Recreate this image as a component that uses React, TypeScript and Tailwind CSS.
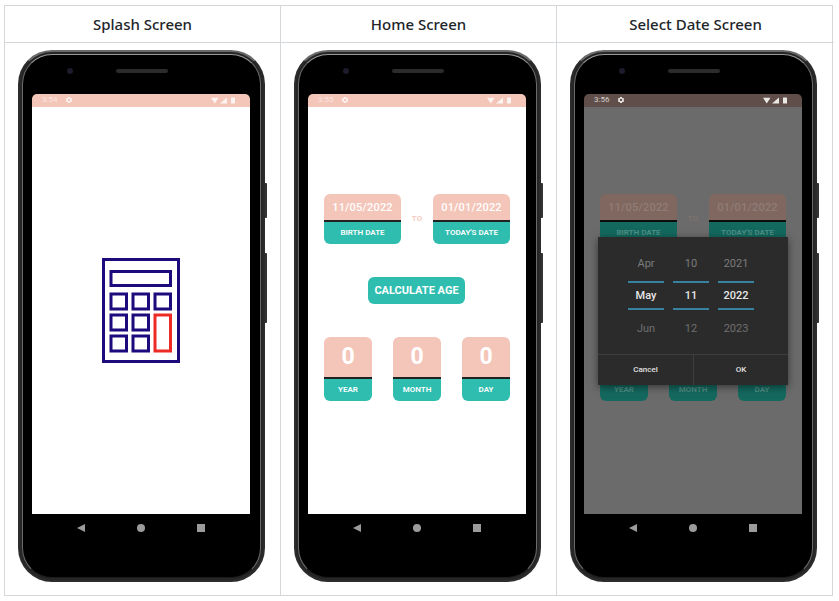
import type { ReactNode } from 'react';

const PINK = 'bg-[#f4c5b9]';
const TEAL = 'bg-[#2fbdaf]';

function StatusBar({ time, dim }: { time: string; dim?: boolean }) {
  const color = dim ? '#ece8e6' : '#fdf3f0';
  return (
    <div className={`${dim ? 'bg-[#5f4e49]' : PINK} flex h-[13px] items-center pl-[10px] pr-[15px]`}>
      <span
        className="w-[23px] font-['Roboto',sans-serif] text-[8px] leading-none"
        style={{ color: dim ? '#d8d2d0' : '#fae6e0' }}
      >
        {time}
      </span>
      <svg width="8" height="8" viewBox="0 0 24 24">
        <path
          fill={color}
          fillRule="evenodd"
          d="M19.4 13a7.5 7.5 0 0 0 0-2l2.1-1.6-2-3.5-2.5 1a7.5 7.5 0 0 0-1.7-1L15 3.2h-6l-.4 2.7a7.5 7.5 0 0 0-1.7 1l-2.5-1-2 3.5L4.5 11a7.5 7.5 0 0 0 0 2l-2.1 1.6 2 3.5 2.5-1a7.5 7.5 0 0 0 1.7 1l.4 2.7h6l.4-2.7a7.5 7.5 0 0 0 1.7-1l2.5 1 2-3.5zM12 15.5a3.5 3.5 0 1 1 0-7 3.5 3.5 0 0 1 0 7z"
        />
      </svg>
      <svg className="ml-auto" width="24" height="7" viewBox="0 0 24 7">
        <path fill={color} d="M0 0.8h7.5L3.75 6.5z" />
        <path fill={color} d="M9 6.5L16 0.5v6z" />
        <rect fill={color} x="20" y="0.5" width="4" height="6" rx="0.5" />
      </svg>
    </div>
  );
}

function DateCard({ date, label, dim }: { date: string; label: string; dim?: boolean }) {
  return (
    <div className="w-[77px] overflow-hidden rounded-[6px]">
      <div
        className={`flex h-[26px] items-center justify-center pt-[2px] text-[11px] font-medium tracking-[0.2px] ${
          dim ? 'bg-[#80675f] text-[#917d77]' : `${PINK} text-white`
        }`}
      >
        {date}
      </div>
      <div className={`h-[2px] ${dim ? 'bg-[#0c0c0c]' : 'bg-[#222]'}`} />
      <div
        className={`flex h-[22px] items-center justify-center pt-[1px] text-[8px] font-semibold ${
          dim ? 'bg-[#14695f] text-[#4f9187]' : `${TEAL} text-white`
        }`}
      >
        {label}
      </div>
    </div>
  );
}

function ResultCard({ label, dim }: { label: string; dim?: boolean }) {
  return (
    <div className="w-[48px] overflow-hidden rounded-[6px]">
      <div
        className={`flex h-[40px] items-center justify-center text-[23px] font-bold ${
          dim ? 'bg-[#80675f] text-[#917d77]' : `${PINK} text-white`
        }`}
      >
        0
      </div>
      <div className={`h-[2px] ${dim ? 'bg-[#0c0c0c]' : 'bg-[#222]'}`} />
      <div
        className={`flex h-[22px] items-center justify-center pt-[1px] text-[8px] font-semibold ${
          dim ? 'bg-[#14695f] text-[#4f9187]' : `${TEAL} text-white`
        }`}
      >
        {label}
      </div>
    </div>
  );
}

function HomeContent({ dim }: { dim?: boolean }) {
  return (
    <div className={`h-full px-[16px] pt-[87px] font-['Roboto',sans-serif] ${dim ? 'bg-[#6b6b6b]' : 'bg-white'}`}>
      <div className="flex items-center justify-between">
        <DateCard date="11/05/2022" label="BIRTH DATE" dim={dim} />
        <span className={`text-[8px] font-medium ${dim ? 'text-[#80746f]' : 'text-[#f4c5b9]'}`}>TO</span>
        <DateCard date="01/01/2022" label="TODAY'S DATE" dim={dim} />
      </div>
      <div className="mt-[33px] flex h-[27px] justify-center pr-[1px]">
        {/* the button sits fully behind the date dialog on the dimmed screen */}
        {!dim && (
          <div className={`${TEAL} flex w-[97px] items-center justify-center rounded-[6px] pt-[1px] text-[11px] font-bold text-white`}>
            CALCULATE AGE
          </div>
        )}
      </div>
      <div className="mt-[33px] flex justify-between">
        <ResultCard label="YEAR" dim={dim} />
        <ResultCard label="MONTH" dim={dim} />
        <ResultCard label="DAY" dim={dim} />
      </div>
    </div>
  );
}

function SplashContent() {
  return (
    <div className="flex h-full items-center justify-center bg-white pr-[1px] pt-[1px]">
      <svg width="80" height="106" viewBox="0 0 80 106" fill="none" strokeWidth="3">
        <g stroke="#1d0a7c">
          <rect x="2.5" y="1.5" width="75" height="102" />
          <rect x="10" y="13.5" width="59.5" height="14" />
          <rect x="10" y="36" width="15.5" height="15" />
          <rect x="32" y="36" width="15.5" height="15" />
          <rect x="54" y="36" width="15.5" height="15" />
          <rect x="10" y="57" width="15.5" height="15" />
          <rect x="32" y="57" width="15.5" height="15" />
          <rect x="10" y="78" width="15.5" height="15" />
          <rect x="32" y="78" width="15.5" height="15" />
        </g>
        <rect x="54" y="57" width="15.5" height="36" stroke="#ee2a24" />
      </svg>
    </div>
  );
}

const pickerColumns = [
  { prev: 'Apr', cur: 'May', next: 'Jun' },
  { prev: '10', cur: '11', next: '12' },
  { prev: '2021', cur: '2022', next: '2023' },
];

function DatePickerDialog() {
  return (
    <div className="absolute left-[14px] top-[143px] w-[190px] bg-[#2b2b2b] font-['Roboto',sans-serif] shadow-[0_2px_8px_rgba(0,0,0,0.5)]">
      <div className="flex h-[117px] justify-start gap-[9px] pl-[30px] pt-[9px]">
        {pickerColumns.map((col) => (
          <div key={col.cur} className="w-[36px] text-center text-[11px] leading-none">
            <div className="flex h-[35px] items-center justify-center pt-[1px] text-[#7c7c7c]">{col.prev}</div>
            <div className="flex h-[29px] items-center justify-center border-y-2 border-[#36829f] pt-[1px] font-medium text-[#e8e8e8]">
              {col.cur}
            </div>
            <div className="flex h-[37px] items-center justify-center pt-[1px] text-[#6f6f6f]">{col.next}</div>
          </div>
        ))}
      </div>
      <div className="flex h-[31px] border-t border-[#3e3e3e] text-[8px] font-medium text-[#e0e0e0]">
        <div className="flex w-[96px] items-center justify-center border-r border-[#3e3e3e]">Cancel</div>
        <div className="flex flex-1 items-center justify-center">OK</div>
      </div>
    </div>
  );
}

function Phone({ time, dim, children }: { time: string; dim?: boolean; children: ReactNode }) {
  return (
    <div className="relative h-[532px] w-[247px]">
      {/* side buttons */}
      <div className="absolute left-[247px] top-[133px] h-[35px] w-[2px] rounded-r-[1px] bg-[#333]" />
      <div className="absolute left-[247px] top-[203px] h-[70px] w-[2px] rounded-r-[1px] bg-[#333]" />
      <div className="h-full rounded-[34px] border-[2px] border-[#2c2c2c] border-t-[#6a6a6a] bg-[#262626] p-[2px]">
        <div className="flex h-full flex-col rounded-[30px] border border-[#6a6a6a] border-b-[#1c1c1c] border-t-[#999] bg-black pl-[9px] pr-[10px]">
          {/* top bezel with camera and speaker */}
          <div className="flex h-[39px] items-center pb-[7px] pl-[35px]">
            <div className="h-[6px] w-[6px] rounded-full bg-[#1b1b2b]" />
            <div className="ml-[43px] h-[4px] w-[52px] rounded-full bg-[#2b2b2b]" />
          </div>
          <div className="relative h-[421px] overflow-hidden rounded-t-[5px]">
            <StatusBar time={time} dim={dim} />
            <div className="h-[408px]">{children}</div>
            {dim && <DatePickerDialog />}
          </div>
          {/* android nav bar */}
          <div className="flex h-[63px] items-start justify-between px-[45px] pt-[10px]">
            <svg width="8" height="8" viewBox="0 0 8 8">
              <path fill="#9b9b9b" d="M0 4l8-4v8z" />
            </svg>
            <div className="h-[8px] w-[8px] rounded-full bg-[#9b9b9b]" />
            <div className="h-[8px] w-[8px] bg-[#9b9b9b]" />
          </div>
        </div>
      </div>
    </div>
  );
}

const columns = [
  { title: 'Splash Screen', time: '3:54', content: <SplashContent /> },
  { title: 'Home Screen', time: '3:55', content: <HomeContent /> },
  { title: 'Select Date Screen', time: '3:56', content: <HomeContent dim />, dim: true },
];

export default function App() {
  return (
    <div className="h-[601px] w-[839px] overflow-hidden bg-white pl-[4px] pt-[5px] font-['Noto_Sans',sans-serif] text-[#212529]">
      <div className="grid h-[591px] w-[829px] grid-cols-[276px_276px_277px] grid-rows-[37px_553px] border border-[#d5d8db]">
        {columns.map((col, i) => (
          <div
            key={col.title}
            className={`flex items-center justify-center border-b border-[#d5d8db] text-[15px] font-medium ${i < 2 ? 'border-r' : ''}`}
          >
            {col.title}
          </div>
        ))}
        {columns.map((col, i) => (
          <div
            key={col.title}
            className={`flex justify-start border-[#d5d8db] pl-[13px] pt-[7px] ${i < 2 ? 'border-r' : ''}`}
          >
            <Phone time={col.time} dim={col.dim}>
              {col.content}
            </Phone>
          </div>
        ))}
      </div>
    </div>
  );
}
